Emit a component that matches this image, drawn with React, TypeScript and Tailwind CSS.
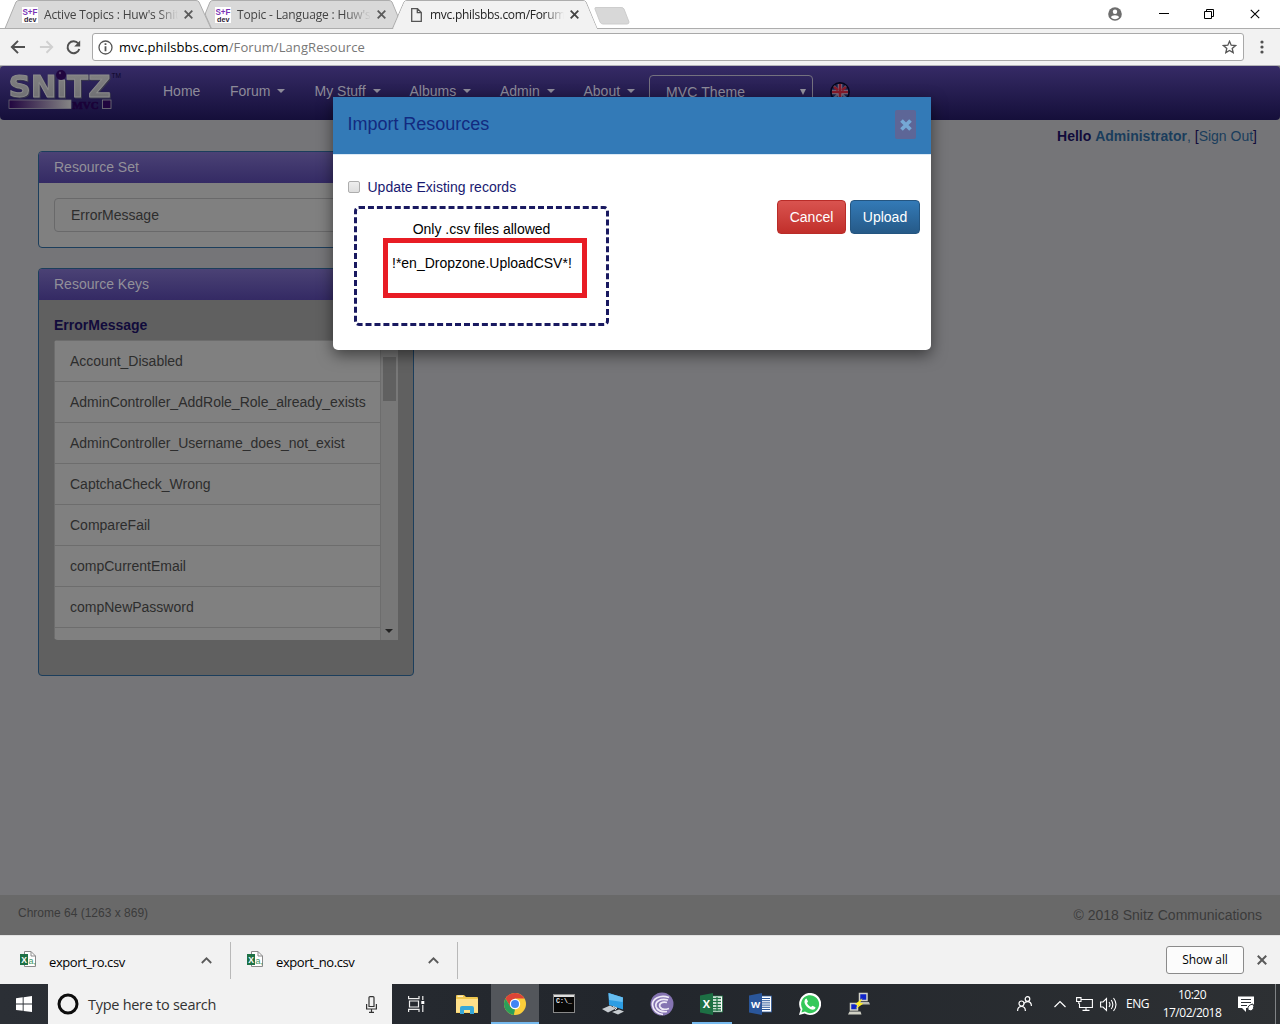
import React from "react";

const UI = "font-['Open_Sans','Noto_Sans',sans-serif]";

function SnitzFavicon() {
  return (
    <svg width="16" height="16" viewBox="0 0 16 16" className="shrink-0">
      <rect width="16" height="16" fill="#fff" />
      <text x="0.5" y="8" fontSize="9.500" fontWeight="bold" fill="#7a35b5" textLength="15" lengthAdjust="spacingAndGlyphs" fontFamily="Liberation Sans">S+F</text>
      <text x="2" y="15" fontSize="7.5" fontWeight="bold" fill="#2c2233" textLength="12.5" lengthAdjust="spacingAndGlyphs" fontFamily="Liberation Sans">dev</text>
    </svg>
  );
}

function Cross({ className = "", size = 9, color = "#5a5a5a", width = 1.8 }: { className?: string; size?: number; color?: string; width?: number }) {
  return (
    <svg className={className} width={size} height={size} viewBox="0 0 9 9" fill="none" stroke={color} strokeWidth={width}>
      <path d="M.7.7 8.3 8.3M8.3.7.7 8.3" />
    </svg>
  );
}

function TabStrip() {
  return (
    <div className="relative h-[29px] shrink-0 bg-white">
      <svg className="absolute inset-0" width="1280" height="29" fill="none">
        <path d="M5 28.5 16 2Q17 .5 19 .5H196Q198 .5 199 2L211 28.5Z" fill="#d9d9d9" stroke="#adadad" />
        <path d="M205.500 13 210 2Q211 .5 213 .5H389Q391 .5 392 2L403 28.500H211.500L205.500 15Z" fill="#d9d9d9" stroke="#adadad" />
        <path d="M0 28.500H392.500L404 2Q405 .5 407 .5H583Q585 .5 586 2L597 28.500H1280" fill="none" stroke="#adadad" />
        <path d="M393 29 404.500 2Q405 1 407 1H583Q585 1 585.500 2L597 29Z" fill="#f2f2f2" />
        <path d="M596 7.500H621Q623.500 7.500 624 9L629 22Q629 24 627 24H603Q601 24 600 22L595 9Q594.500 7.500 596 7.500Z" fill="#d8d8d8" stroke="#cdcdcd" />
      </svg>
      <div className={`relative flex h-[29px] items-center text-[12px] text-[#444] ${UI}`}>
        <div className="ml-[22px] flex w-[193px] items-center">
          <SnitzFavicon />
          <span className="ml-[6px] w-[134px] whitespace-nowrap tracking-[-0.180px] [mask-image:linear-gradient(to_right,#000_85%,transparent)]">Active Topics : Huw's Snit</span>
          <Cross className="ml-[6px]" />
        </div>
        <div className="flex w-[194px] items-center">
          <SnitzFavicon />
          <span className="ml-[6px] w-[134px] whitespace-nowrap tracking-[-0.160px] [mask-image:linear-gradient(to_right,#000_80%,transparent)]">Topic - Language : Huw's</span>
          <Cross className="ml-[6px]" />
        </div>
        <div className="flex items-center text-[#222]">
          <svg className="ml-[2px]" width="11" height="14" viewBox="0 0 11 14" fill="none" stroke="#555" strokeWidth="1.3">
            <path d="M.7.7H6.500L10.300 4.500V13.300H.7ZM6.300.7V4.700H10.300" />
          </svg>
          <span className="ml-[8px] w-[134px] whitespace-nowrap tracking-[-0.280px] [mask-image:linear-gradient(to_right,#000_85%,transparent)]">mvc.philsbbs.com/Forum</span>
          <Cross className="ml-[6px]" color="#444" />
        </div>
        <div className="ml-auto flex items-center">
          <svg className="mr-[37px] -mt-[2px]" width="14" height="14" viewBox="0 0 14 14">
            <circle cx="7" cy="7" r="6.800" fill="#6d6d6d" />
            <circle cx="7" cy="4.700" r="2.200" fill="#fff" />
            <path d="M2.900 10.200C3.500 7.500 10.500 7.500 11.100 10.200 9 12.800 5 12.800 2.900 10.200Z" fill="#fff" />
          </svg>
          <div className="mr-[35px] -mt-[2px] h-px w-[10px] bg-black" />
          <svg className="mr-[36px] -mt-[2px]" width="10" height="10" fill="none" stroke="#000">
            <path d="M.5 2.500H7.500V9.500H.5ZM2.500 2.500V.5H9.500V7.500H7.500" />
          </svg>
          <Cross className="mr-[20px] -mt-[2px]" size={10} color="#000" width={1} />
        </div>
      </div>
    </div>
  );
}

function Toolbar() {
  return (
    <div className="flex h-[37px] shrink-0 items-center border-b border-[#b4b4b8] bg-[#f2f2f2]">
      <svg className="ml-[10px]" width="16" height="14" viewBox="0 0 16 14" fill="none" stroke="#505050" strokeWidth="2">
        <path d="M15 7H2.500M8 .9 1.900 7 8 13.100" />
      </svg>
      <svg className="ml-[13px]" width="15" height="14" viewBox="0 0 16 14" fill="none" stroke="#d0d0d0" strokeWidth="2">
        <path d="M1 7H13.500M8 .9 14.100 7 8 13.100" />
      </svg>
      <svg className="ml-[12px]" width="15" height="15" viewBox="0 0 15 15" fill="none" stroke="#505050" strokeWidth="2">
        <path d="M12.300 3.500A6 6 0 1 0 13.300 9" />
        <path d="M14.200.5V6.500H8.200Z" fill="#505050" stroke="none" />
      </svg>
      <div className="ml-[11px] flex h-[28px] w-[1152px] items-center rounded-[3px] border border-[#a9a9a9] bg-white">
        <svg className="ml-[5px]" width="15" height="15" viewBox="0 0 15 15" fill="none" stroke="#555">
          <circle cx="7.500" cy="7.500" r="6.500" strokeWidth="1.300" />
          <path d="M7.500 6.300V11.300M7.500 3.300V5" strokeWidth="1.800" />
        </svg>
        <span className={`ml-[6px] text-[13px] leading-[18px] tracking-[0.080px] whitespace-nowrap text-[#777] ${UI}`}>
          <span className="text-black">mvc.philsbbs.com</span>/Forum/LangResource
        </span>
        <svg className="mr-[6px] ml-auto" width="15" height="14" viewBox="0 0 15 14" fill="none" stroke="#555" strokeWidth="1.300">
          <path d="M7.500 1.300 9.200 5.200 13.500 5.600 10.200 8.400 11.200 12.600 7.500 10.400 3.800 12.600 4.800 8.400 1.500 5.600 5.800 5.200Z" />
        </svg>
      </div>
      <svg className="ml-[16px]" width="4" height="14" viewBox="0 0 4 14" fill="#505050">
        <circle cx="2" cy="2" r="1.600" /><circle cx="2" cy="7" r="1.600" /><circle cx="2" cy="12" r="1.600" />
      </svg>
    </div>
  );
}

function Logo() {
  return (
    <svg className="mt-[2px] ml-[6px] shrink-0" width="117" height="46" viewBox="6 68 117 46">
      <defs>
        <linearGradient id="silver" x1="0" y1="0" x2="0" y2="1"><stop offset="0" stopColor="#858585" /><stop offset="1" stopColor="#6c6c70" /></linearGradient>
        <linearGradient id="bar" x1="0" x2="1"><stop offset="0" stopColor="#21053f" /><stop offset="1" stopColor="#858585" /></linearGradient>
      </defs>
      <text className="drop-shadow-[1px_1px_0_#3a394c]" x="8.500" y="96.500" fontSize="30" fontWeight="bold" fontFamily="DejaVu Sans" fill="url(#silver)" stroke="#8b8b8b" strokeWidth="1" textLength="102" lengthAdjust="spacingAndGlyphs">SNıTZ</text>
      <circle cx="61" cy="75" r="5" fill="#21063f" /><circle cx="60" cy="73" r="1.200" fill="#54416b" />
      <text x="111.500" y="77.500" fontSize="7" fontFamily="Liberation Sans" fill="#0d0628" textLength="9.500" lengthAdjust="spacingAndGlyphs">TM</text>
      <rect x="9" y="100" width="62" height="8.500" fill="url(#bar)" stroke="#77777c" strokeWidth=".7" />
      <text x="72.500" y="108.500" fontSize="11" fontWeight="bold" fontFamily="Liberation Serif" fill="#1a0238" stroke="#1a0238" strokeWidth=".6" textLength="26" lengthAdjust="spacingAndGlyphs">MVC</text>
      <rect x="102.500" y="100" width="8.500" height="8.500" fill="#21053f" stroke="#77777c" strokeWidth=".8" />
    </svg>
  );
}

function Caret() {
  return <span className="ml-[7px] border-x-4 border-t-4 border-x-transparent border-t-[#8d8b99]" />;
}

function NavItem({ label, caret = true, className }: { label: string; caret?: boolean; className: string }) {
  return (
    <div className={`flex items-center whitespace-nowrap ${className}`}>
      {label}
      {caret && <Caret />}
    </div>
  );
}

function Navbar() {
  return (
    <div className="flex h-[54px] rounded-[4px] bg-linear-to-b from-[#362b66] to-[#150f3a] text-[14px] text-[#8d8b99]">
      <Logo />
      <div className="flex h-[50px] items-center">
        <NavItem label="Home" caret={false} className="ml-[40px] w-[67px]" />
        <NavItem label="Forum" className="w-[84.500px]" />
        <NavItem label="My Stuff" className="w-[95px]" />
        <NavItem label="Albums" className="w-[90.500px]" />
        <NavItem label="Admin" className="w-[83.500px]" />
        <NavItem label="About" className="w-[65.500px]" />
      </div>
      <div className="mt-[9px] flex h-[34px] w-[164px] items-center rounded-[4px] border border-[#74717f] pr-[6px] pl-[16px]">
        <span className="tracking-[.1px]">MVC Theme</span>
        <span className="ml-auto border-x-[3px] border-t-[6px] border-x-transparent border-t-[#93919d]" />
      </div>
      <svg className="mt-[16px] ml-[17px]" width="20" height="20" viewBox="0 0 20 20">
        <circle cx="10" cy="10" r="9.200" fill="#17204d" stroke="#060418" strokeWidth="1.500" />
        <path d="M4 4 16 16M16 4 4 16" stroke="#616078" strokeWidth="2" />
        <path d="M10 2V18M2 10H18" stroke="#797489" strokeWidth="4.500" />
        <path d="M10 2V18M2 10H18M4 5 8 8M16 5 12 8" stroke="#861b2b" strokeWidth="2.600" />
      </svg>
    </div>
  );
}

function PanelHeading({ children }: { children: React.ReactNode }) {
  return (
    <div className="flex h-[31px] items-center bg-linear-to-b from-[#4b4275] to-[#342a64] pl-[15px] text-[14px] text-[#929099]">{children}</div>
  );
}

const KEYS = [
  "Account_Disabled",
  "AdminController_AddRole_Role_already_exists",
  "AdminController_Username_does_not_exist",
  "CaptchaCheck_Wrong",
  "CompareFail",
  "compCurrentEmail",
  "compNewPassword",
];

function Panels() {
  return (
    <div className="mt-[31px] ml-[38px] flex w-[376px] flex-col gap-[20px] text-[14px] text-[#2d2d2d]">
      <div className="h-[97px] overflow-hidden rounded-[4px] border border-[#1c3e5c] bg-[#808080]">
        <PanelHeading>Resource Set</PanelHeading>
        <div className="mx-[15px] mt-[15px] flex h-[34px] items-center rounded-[4px] border border-[#69696a] pl-[16px]">ErrorMessage</div>
      </div>
      <div className="h-[408px] overflow-hidden rounded-[4px] border border-[#1c3e5c] bg-[#606060]">
        <PanelHeading>Resource Keys</PanelHeading>
        <div className="mt-[15px] ml-[15px] h-[25px] leading-[20px] font-bold text-[#110b3b]">ErrorMessage</div>
        <div className="ml-[15px] flex h-[300px] w-[344px] overflow-hidden rounded-l-[4px] bg-[#808080]">
          <div className="w-[327px] border-x border-[#6d6d6d]">
            {KEYS.map((key) => (
              <div key={key} className="flex h-[41px] items-center border-t border-[#6d6d6d] pl-[15px] whitespace-nowrap">{key}</div>
            ))}
            <div className="border-t border-[#6d6d6d]" />
          </div>
          <div className="flex w-[17px] flex-col items-center bg-[#787878] pt-[17px]">
            <div className="h-[44px] w-[13px] bg-[#606060]" />
            <span className="mt-auto mr-px mb-[7px] border-x-4 border-t-4 border-x-transparent border-t-[#222]" />
          </div>
        </div>
      </div>
    </div>
  );
}

function ImportDialog() {
  return (
    <div className="absolute top-[31px] left-[333px] h-[253px] w-[598px] overflow-visible rounded-b-[5px] bg-white text-[14px] shadow-[0_5px_15px_rgba(0,0,0,0.5)]">
      <div className="flex h-[58px] items-center justify-between border-b border-[#dceaf6] bg-[#337ab7] pr-[15px] pl-[15px]">
        <span className="-mt-[4px] -ml-[0.500px] text-[18px] leading-[24px] tracking-[-0.020px] text-[#122a80]">Import Resources</span>
        <div className="-mt-[2px] flex h-[29px] w-[21px] items-center justify-center rounded-[2px] bg-[#5d6697]">
          <svg width="12" height="12" viewBox="0 0 12 12" stroke="#75a8d5" strokeWidth="3.700"><path d="M1.500 1.500 10.500 10.500M10.500 1.500 1.500 10.500" /></svg>
        </div>
      </div>
      <div className="flex justify-between">
        <div>
          <div className="mt-[22px] ml-[15px] flex h-[20px] items-center text-[#191970]">
            <span className="h-[12px] w-[12px] rounded-[2px] border border-[#adadad] bg-linear-to-b from-[#eee] to-[#dedede]" />
            <span className="ml-[7.500px]">Update Existing records</span>
          </div>
          <div className="mt-[9px] ml-[21px] h-[120px] w-[255px] rounded-[5px] border-[3px] border-dashed border-[#191960] text-black">
            <div className="mt-[10px] text-center leading-[20px]">Only .csv files allowed</div>
            <div className="-mt-[1px] ml-[26px] h-[60px] w-[204px] border-[5px] border-[#e81c24] pt-[10px] pl-[4px] leading-[20px] whitespace-nowrap">
              !*en_Dropzone.UploadCSV*!
            </div>
          </div>
        </div>
        <div className="mt-[45px] mr-[11px] flex h-[34px] gap-[4px] text-white">
          <button className="w-[69px] rounded-[4px] border border-[#b92c28] bg-linear-to-b from-[#d9534f] to-[#c12e2a]">Cancel</button>
          <button className="w-[70px] rounded-[4px] border border-[#245580] bg-linear-to-b from-[#337ab7] to-[#265a88]">Upload</button>
        </div>
      </div>
    </div>
  );
}

function WebPage() {
  return (
    <div className="relative flex h-[869px] shrink-0 flex-col bg-[#757578] font-['Liberation_Sans',Arial,sans-serif]">
      <Navbar />
      <div className="mt-[6px] -mb-[26px] flex h-[20px] justify-end pr-[23px] text-[14px] leading-[20px] text-[#1a3d5c]">
        <span><b className="text-[#110b3b]">Hello</b> <b>Administrator</b>, <span className="text-[#110b3b]">[</span>Sign Out<span className="text-[#110b3b]">]</span></span>
      </div>
      <Panels />
      <div className="mt-auto flex h-[40px] justify-between bg-[#696969] pr-[18px] pl-[18px] text-[#3b3b3b]">
        <span className="pt-[9px] text-[12px] leading-[18px]">Chrome 64 (1263 x 869)</span>
        <span className="pt-[10px] text-[14px] leading-[20px]">© 2018 Snitz Communications</span>
      </div>
      <ImportDialog />
    </div>
  );
}

function CsvIcon() {
  return (
    <svg width="17" height="17" viewBox="0 0 17 17" className="-mt-[1px]">
      <path d="M4.500.5H11L15.500 5V15.500H4.500Z" fill="#fff" stroke="#8a8a8a" /><path d="M11 .5V5H15.500" fill="none" stroke="#8a8a8a" />
      <rect y="3" width="8" height="11" fill="#1f7246" />
      <text x="1.200" y="11.500" fontSize="8.500" fontWeight="bold" fill="#fff" fontFamily="Liberation Sans">X</text>
      <text x="8.500" y="13" fontSize="9" fill="#3d9665" fontFamily="Liberation Sans">a,</text>
    </svg>
  );
}

function Download({ name, className }: { name: string; className: string }) {
  return (
    <div className={`flex h-[37px] items-center border-r border-[#b9b9b9] ${className}`}>
      <CsvIcon />
      <span className="mt-[5px] ml-[12px] text-[13px] tracking-[-0.400px]">{name}</span>
      <svg className="mr-[18px] ml-auto" width="11" height="7" viewBox="0 0 11 7" fill="none" stroke="#5a5a5a" strokeWidth="1.800"><path d="M.8 6 5.500 1.300 10.200 6" /></svg>
    </div>
  );
}

function DownloadsBar() {
  return (
    <div className={`flex h-[49px] shrink-0 items-center border-t border-[#e2e2e2] bg-[#f2f2f2] text-black ${UI}`}>
      <Download name="export_ro.csv" className="ml-[20px] w-[211px]" />
      <Download name="export_no.csv" className="ml-[16px] w-[211px]" />
      <div className="ml-auto flex h-[28px] w-[78px] items-center justify-center rounded-[3px] border border-[#8b8b8b] bg-[#fcfcfc] pb-px text-[12px] tracking-[-0.100px]">Show all</div>
      <Cross className="mr-[13px] ml-[13px]" size={10} />
    </div>
  );
}

function OfficeIcon({ letter, color, dark }: { letter: string; color: string; dark: string }) {
  return (
    <svg width="23" height="22" viewBox="0 0 23 22">
      <rect x="11" y="3" width="11.500" height="16" fill="#fff" stroke={color} strokeWidth=".8" />
      {letter === "X" ? (
        <path d="M13 5.500H21M13 8.500H21M13 11.500H21M13 14.500H21M13 17H21M17 4V18" stroke={color} strokeWidth="1.300" />
      ) : (
        <path d="M13 5.500H21M13 7.700H21M13 9.900H21M13 12.100H21M13 14.300H21M13 16.500H21" stroke={color} strokeWidth="1" />
      )}
      <path d="M0 2.500 13 0V22L0 19.500Z" fill={dark} />
      <text x="6.500" y="15" textAnchor="middle" fontSize={letter === "W" ? 9.5 : 11} fontWeight="bold" fill="#fff" fontFamily="Open Sans">{letter}</text>
    </svg>
  );
}

function AppSlot({ children, active = false, running = false }: { children: React.ReactNode; active?: boolean; running?: boolean }) {
  return (
    <div className={`relative flex h-[40px] w-[48px] items-center justify-center ${active ? "bg-[#53565b]" : ""}`}>
      {children}
      {active && <span className="absolute bottom-0 left-0 h-[2px] w-[48px] bg-[#76b9ed]" />}
      {running && <span className="absolute bottom-0 left-[4px] h-[2px] w-[40px] bg-[#76b9ed]" />}
    </div>
  );
}

function Taskbar() {
  return (
    <div className={`flex h-[40px] shrink-0 items-center bg-linear-to-r from-[#2b2f35] via-[#22262c] to-[#2d3033] text-white ${UI}`}>
      <div className="flex w-[48px] justify-center">
        <svg width="16" height="16" viewBox="0 0 16 16" fill="#fff"><path d="M0 2.200 6.700 1.300V7.600H0ZM7.600 1.200 16 0V7.600H7.600ZM0 8.500H6.700V14.800L0 13.900ZM7.600 8.500H16V16L7.600 14.900Z" /></svg>
      </div>
      <div className="flex h-[40px] w-[344px] items-center bg-[#f2f2f2] text-[#333]">
        <svg className="ml-[9px]" width="22" height="22"><circle cx="11" cy="11" r="9" fill="none" stroke="#0d0d0d" strokeWidth="3" /></svg>
        <span className="mt-px ml-[9px] text-[14.500px] tracking-[-0.280px]">Type here to search</span>
        <svg className="mr-[15px] ml-auto" width="11" height="17" viewBox="0 0 11 17" fill="none" stroke="#333" strokeWidth="1.200">
          <path d="M3 1.500Q3 .6 4 .6H7Q8 .6 8 1.500V10.500H3ZM.6 8V13H10.400V8M5.500 13V16.400M3 16.400H8" />
        </svg>
      </div>
      <div className="flex gap-[1.100px]">
        <AppSlot>
          <svg width="17" height="16" viewBox="0 0 17 16" fill="none" stroke="#eee" strokeWidth="1.200"><path d="M.6 0V2.600H11V0M.6 16V13.400H11V16M1.500 5H10.500V11H1.500ZM14.800 0V4M14.800 9V16" /><path d="M13.300 5H16.300V8H13.300Z" fill="#fff" stroke="none" /></svg>
        </AppSlot>
        <AppSlot>
          <svg className="ml-[3px]" width="22" height="19" viewBox="0 0 22 19"><path d="M0 1Q0 0 1 0H8L10 2H21Q22 2 22 3V18H0Z" fill="#efc74e" /><path d="M0 4H22V17.500H0Z" fill="#fee08a" /><path d="M4 19V13Q4 11 6 11H16Q18 11 18 13V19H14V15H8V19Z" fill="#37a8d8" /><path d="M1.500 1.200H7" stroke="#fff" /></svg>
        </AppSlot>
        <div className="ml-[1px]">
          <AppSlot active>
            <svg width="22" height="22" viewBox="0 0 22 22"><circle cx="11" cy="11" r="11" fill="#fbce3a" /><path d="M1.470 5.500A11 11 0 0 1 20.530 5.500H11L6.200 13.700Z" fill="#dc4437" /><path d="M1.470 5.500 6.400 13.700 11 16.500 9.800 21.930A11 11 0 0 1 1.470 5.500Z" fill="#2b9f5a" /><circle cx="11" cy="11" r="5.200" fill="#fff" /><circle cx="11" cy="11" r="4" fill="#4285f4" /></svg>
          </AppSlot>
        </div>
        <AppSlot>
          <svg className="-mt-px" width="22" height="19" viewBox="0 0 22 19"><rect x=".5" y=".5" width="21" height="18" fill="#080808" stroke="#898989" /><rect x="1" y="1" width="20" height="2" fill="#ddd" /><text x="3" y="9" fontSize="6.500" fontWeight="bold" fill="#eee" textLength="16" fontFamily="Liberation Mono">C:\_</text></svg>
        </AppSlot>
        <AppSlot>
          <svg width="24" height="22" viewBox="0 0 24 22"><path d="M7.500 0 22 4.500V16.500L8 12Z" fill="#2d9de3" /><path d="M7.500 0 22 4.500 21.500 9 8 7Z" fill="#66bdf0" /><path d="M1 16 9 12.500 15 15.500 7 19.500ZM11 19 18 16.500 23 18.500 17 21.500Z" fill="#c7ccd0" /><path d="M12 13.500 16 15 14 17" stroke="#ddd" fill="none" /></svg>
        </AppSlot>
        <AppSlot>
          <svg width="24" height="24" viewBox="0 0 24 24"><circle cx="12" cy="12" r="11.500" fill="#8574b2" /><g fill="none" stroke="#eeeaf7" strokeWidth="1.700"><path d="M19 5.500C10 2 2 7 2.500 13 3 18 7 22 13 22.500" /><path d="M18 8C10 6 5 10 6 14.500 7 18.500 12 20.500 17 19.500" /><path d="M17 10.500C12 9 8.500 12 10 15 11.500 17.500 15 18 19 16.500" /></g></svg>
        </AppSlot>
        <AppSlot running><OfficeIcon letter="X" color="#217346" dark="#1d7044" /></AppSlot>
        <AppSlot><OfficeIcon letter="W" color="#2b579a" dark="#2a569a" /></AppSlot>
        <AppSlot>
          <svg width="22" height="22" viewBox="0 0 22 22"><path d="M0 22 1.600 16.400A11 11 0 1 1 5.700 20.500Z" fill="#fff" /><path d="M2.400 19.600 3.500 16A9 9 0 1 1 6 18.600Z" fill="#35c85a" /><path d="M7.500 5.500 9 8.500 8 10C8.700 11.800 10.200 13.200 12 14L13.500 12.700 16.500 14.200C16.200 17 13.500 17 11.500 16.200 8.500 15 6.300 12.500 5.600 10 5.200 8 6 5.800 7.500 5.500Z" fill="#fff" /></svg>
        </AppSlot>
        <AppSlot>
          <svg width="22" height="24" viewBox="0 0 22 24"><path d="M11.500 1.500H19V8.500H11.500Z" fill="#1024c8" stroke="#d4d4c8" strokeWidth="1.500" /><path d="M11 10H21L22 12.500H12Z" fill="#bcbcb0" /><path d="M2.500 11.500H9.500V18H2.500Z" fill="#1024c8" stroke="#d4d4c8" strokeWidth="1.500" /><path d="M1.500 19.500H12.500L13.500 22.500H0Z" fill="#d0d0c4" /><path d="M14.500 6 7 12.500 10.500 13 7.500 17 15.500 11.500 12 11Z" fill="#ffed22" /></svg>
        </AppSlot>
      </div>
      <div className="ml-auto flex h-[40px] items-center">
        <svg width="15" height="16" viewBox="0 0 15 16" fill="none" stroke="#fff" strokeWidth="1.200"><circle cx="10.500" cy="3" r="2.300" /><circle cx="4.500" cy="7.500" r="2.500" /><path d="M.6 15Q.6 10.500 4.500 10.500T8.400 15M7 7.500Q8 5.600 10.500 5.600 14.400 5.600 14.400 10" /></svg>
        <svg className="ml-[22px]" width="12" height="8" viewBox="0 0 12 8" fill="none" stroke="#fff" strokeWidth="1.200"><path d="M.5 7 6 1.500 11.500 7" /></svg>
        <svg className="ml-[10px]" width="17" height="14" viewBox="0 0 17 14" fill="none" stroke="#fff" strokeWidth="1.100"><path d="M5.500 2.500H16.400V10.500H3.500V6.500M10 10.500V13.400M6.500 13.400H13.500M.6.6H5V4.500H.6ZM2.800 4.500V6.500H3.500" /></svg>
        <svg className="ml-[7px]" width="17" height="15" viewBox="0 0 17 15" fill="none" stroke="#fff" strokeWidth="1.100"><path d="M.6 5H3L6.500 1.500V13.500L3 10H.6ZM9 5Q11 7.500 9 10M11.200 3Q14.500 7.500 11.200 12M13.500 1Q18.500 7.500 13.500 14" /></svg>
        <span className="ml-[9px] w-[24px] text-[12px] tracking-[-0.500px]">ENG</span>
        <div className="ml-[12px] w-[60px] text-center text-[12px] leading-[18px] tracking-[-0.500px] whitespace-nowrap">10:20<br />17/02/2018</div>
        <svg className="mr-[20px] ml-[16px]" width="17" height="17" viewBox="0 0 17 17"><path d="M0 .5H16V12H8V16L4 12H0Z" fill="#fff" /><path d="M3 3.500H13M3 6.500H13M3 9.500H9" stroke="#2c3034" strokeWidth="1.200" /><path d="M10 14Q9 9 15 8 17 13 13 15Z" fill="#fff" stroke="#2c3034" /></svg>
        <div className="mr-[4px] h-[40px] w-px bg-[#808386]" />
      </div>
    </div>
  );
}

export default function App() {
  return (
    <div className="flex h-[1024px] w-[1280px] flex-col overflow-hidden">
      <TabStrip />
      <Toolbar />
      <WebPage />
      <DownloadsBar />
      <Taskbar />
    </div>
  );
}
